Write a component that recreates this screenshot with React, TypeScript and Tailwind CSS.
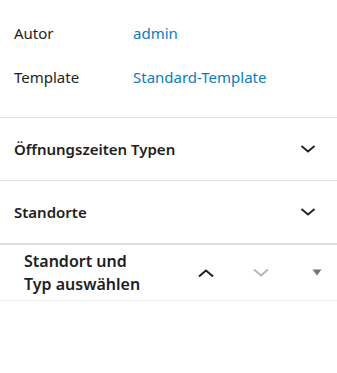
const Chevron = ({ up = false, className = "" }: { up?: boolean; className?: string }) => (
  <svg width="18" height="10" viewBox="0 0 18 10" className={className} fill="none">
    <path
      d={up ? "M2 8.5L9 2.5L16 8.5" : "M2 1.5L9 7.5L16 1.5"}
      stroke="currentColor"
      strokeWidth="2"
    />
  </svg>
);

const PanelChevron = () => (
  <svg width="16" height="8" viewBox="0 0 16 8" fill="none" className="text-[#1e1e1e]">
    <path d="M1.5 1L8 6.5L14.5 1" stroke="currentColor" strokeWidth="1.8" />
  </svg>
);

const App = () => {
  const meta = [
    { label: "Autor", value: "admin" },
    { label: "Template", value: "Standard-Template" },
  ];

  const panels = ["Öffnungszeiten Typen", "Standorte"];

  return (
    <div
      className="w-[337px] h-[373px] bg-white text-[#1e1e1e]"
      style={{ fontFamily: '"Noto Sans", "Open Sans", sans-serif' }}
    >
      <div className="pt-[11px] pb-[18px] pl-[14px]">
        {meta.map((m) => (
          <div key={m.label} className="flex items-center h-[44px] text-[15px]">
            <span className="w-[119px]">{m.label}</span>
            <a href="#" className="text-[#0a7cc0]">
              {m.value}
            </a>
          </div>
        ))}
      </div>

      {panels.map((p) => (
        <div
          key={p}
          className="flex items-center justify-between h-[63px] border-t border-[#e0e0e0] pl-[14px] pr-[21px]"
        >
          <span className="text-[15px] font-semibold">{p}</span>
          <PanelChevron />
        </div>
      ))}

      <div className="border-t-2 border-[#dddddd] border-b border-b-[#f0f0f0] h-[58px] flex items-center pl-[24px]">
        <div className="w-[150px] text-[16px] font-semibold leading-[23px]">
          Standort und
          <br />
          Typ auswählen
        </div>
        <div className="flex items-center ml-[23px]">
          <Chevron up className="text-[#1e1e1e]" />
          <Chevron className="text-[#b4b4b4] ml-[37px]" />
          <svg width="10" height="7" viewBox="0 0 10 7" className="ml-[42px] text-[#757575]">
            <path d="M0.5 0.5H9.5L5 6.5Z" fill="currentColor" />
          </svg>
        </div>
      </div>
    </div>
  );
};

export default App;
